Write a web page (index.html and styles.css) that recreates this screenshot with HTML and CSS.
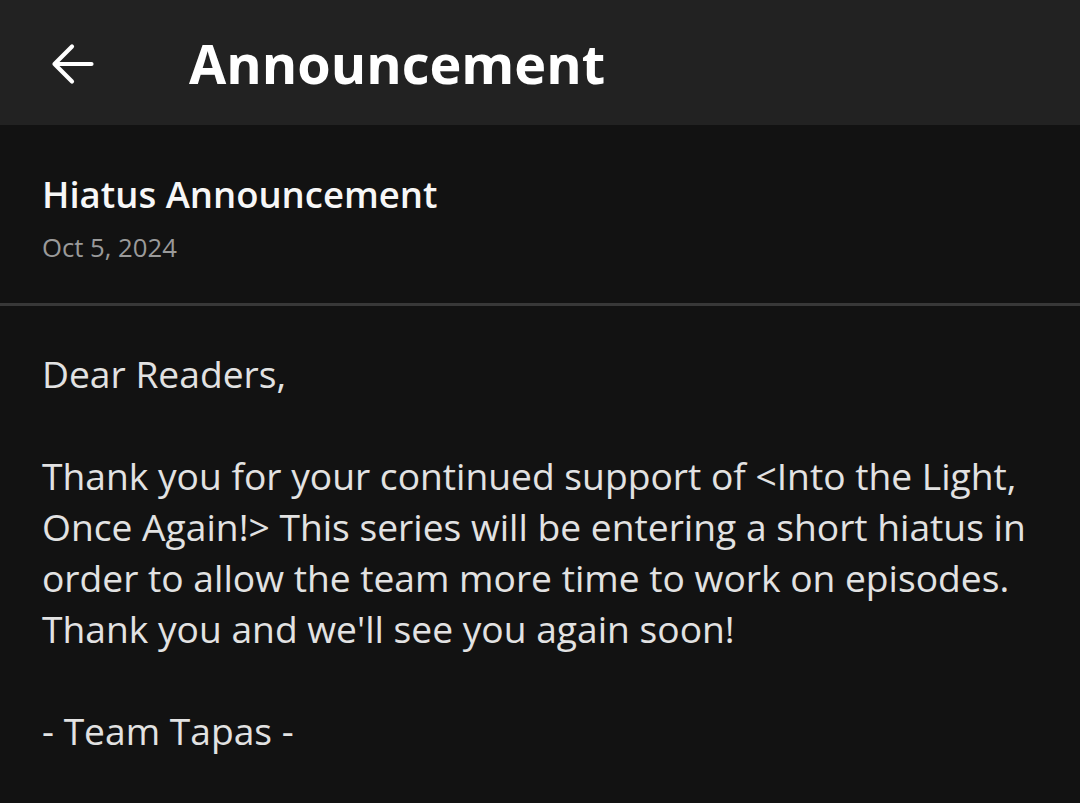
FILE: index.html
```html
<!DOCTYPE html>
<html lang="en">
<head>
    <meta charset="UTF-8">
    <meta name="viewport" content="width=device-width, initial-scale=1.0">
    <title>Announcement</title>
    <link rel="stylesheet" href="styles.css">
</head>
<body>
    <div class="top_bar">
        <a class="back" href="#">
            <svg width="44" height="44" viewBox="0 0 44 44">
                <path d="M21 3.5 L3.5 21 L21 38.5 M3.5 21 H40.5" fill="none" stroke="#fff" stroke-width="4.2" stroke-linecap="round" stroke-linejoin="round"/>
            </svg>
        </a>
        <h1 class="page_title">Announcement</h1>
    </div>

    <div class="notice_head">
        <div class="notice_title">Hiatus Announcement</div>
        <div class="notice_date">Oct 5, 2024</div>
    </div>

    <div class="notice_body">
        <p>Dear Readers,</p>
        <p>Thank you for your continued support of &lt;Into the Light, Once Again!&gt; This series will be entering a short hiatus in order to allow the team more time to work on episodes. Thank you and we'll see you again soon!</p>
        <p>- Team Tapas -</p>
    </div>
</body>
</html>
```

FILE: styles.css
```css
* {
    font-family: "Open Sans", "Noto Sans", sans-serif;
    box-sizing: border-box;
}

body {
    margin: 0;
    background-color: #121212;
    color: #e2e2e2;
}

.top_bar {
    display: flex;
    align-items: center;
    height: 125px;
    padding-left: 51px;
    background-color: #222222;
}

.back {
    display: flex;
    width: 44px;
    height: 44px;
    margin-top: 4px;
}

.page_title {
    margin: 0 0 0 94px;
    font-size: 54px;
    line-height: 76px;
    font-weight: bold;
    color: #ffffff;
}

.notice_head {
    padding: 43px 42px 35px;
    border-bottom: 3px solid #383838;
}

.notice_title {
    font-size: 36.5px;
    line-height: 52px;
    font-weight: 600;
    color: #f7f7f7;
}

.notice_date {
    margin-top: 8px;
    font-size: 25.7px;
    line-height: 40px;
    color: #9a9a9a;
}

.notice_body {
    padding: 42px 40px 0 42px;
}

.notice_body p {
    margin: 0 0 51px;
    font-size: 37.2px;
    line-height: 51px;
}
```
